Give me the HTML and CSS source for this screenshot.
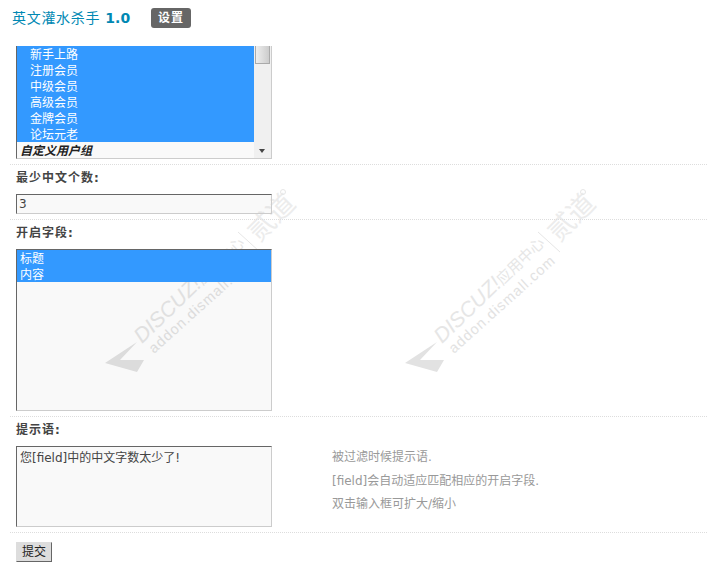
FILE: index.html
```html
<!DOCTYPE html>
<html lang="zh">
<head>
<meta charset="utf-8">
<title>英文灌水杀手 1.0</title>
<link rel="stylesheet" href="styles.css">
</head>
<body>
<svg class="watermark" width="707" height="573" viewBox="0 0 707 573" aria-hidden="true">
  <defs>
    <g id="mark">
      <path class="wm-arrow" d="M105 363 L137 342 L120 360 L144 360 L137 372 Z"/>
      <text class="wm-main" transform="translate(142 344) rotate(-44)">DISCUZ!<tspan class="wm-cn">应用中心</tspan></text>
      <text class="wm-sub" transform="translate(154 354) rotate(-42)">addon.dismall.com</text>
      <path class="wm-bar" d="M238 232 L260 252"/>
      <text class="wm-cn2" transform="translate(259 243) rotate(-45)">贰道</text>
      <circle class="wm-reg" cx="283" cy="192" r="2.5"/>
    </g>
  </defs>
  <use href="#mark"/>
  <use href="#mark" x="300"/>
</svg>
<main class="page">
  <header class="head">
    <h1 class="title">英文灌水杀手 <b>1.0</b></h1>
    <a class="tab">设置</a>
  </header>
  <form class="form">
    <section class="row first">
      <div class="listbox groups">
        <div class="options">
          <div class="opt sel nested">新手上路</div>
          <div class="opt sel nested">注册会员</div>
          <div class="opt sel nested">中级会员</div>
          <div class="opt sel nested">高级会员</div>
          <div class="opt sel nested">金牌会员</div>
          <div class="opt sel nested">论坛元老</div>
          <div class="opt group">自定义用户组</div>
        </div>
        <div class="scrollbar">
          <div class="thumb"></div>
          <div class="arrow"></div>
        </div>
      </div>
    </section>
    <section class="row">
      <label class="label">最少中文个数:</label>
      <input class="field text" value="3">
    </section>
    <section class="row">
      <label class="label">开启字段:</label>
      <div class="listbox fields">
        <div class="options">
          <div class="opt sel">标题</div>
          <div class="opt sel">内容</div>
        </div>
      </div>
    </section>
    <section class="row">
      <label class="label">提示语:</label>
      <div class="split">
        <textarea class="field area">您[field]中的中文字数太少了!</textarea>
        <div class="tips">
          <p>被过滤时候提示语.</p>
          <p>[field]会自动适应匹配相应的开启字段.</p>
          <p>双击输入框可扩大/缩小</p>
        </div>
      </div>
    </section>
    <div class="actions"><button class="submit" type="button">提交</button></div>
  </form>
</main>
</body>
</html>
```
FILE: styles.css
```css
* { box-sizing: border-box; }
html, body { margin: 0; padding: 0; background: #fff; }
body {
  position: relative;
  width: 707px;
  height: 573px;
  overflow: hidden;
  font: 12px/16px "DejaVu Sans", "Noto Sans CJK SC", sans-serif;
  color: #444;
}
.watermark { position: absolute; left: 0; top: 0; z-index: 0; }
.wm-arrow { fill: #e2e2e2; }
.wm-main { font: italic 21px "Liberation Sans", "Noto Sans CJK SC", sans-serif; fill: #e6e6e6; }
.wm-cn { font-size: 15px; font-style: normal; }
.wm-sub { font: 14.5px "Liberation Sans", sans-serif; letter-spacing: 1px; fill: #e2e2e2; }
.wm-bar { stroke: #e6e6e6; stroke-width: 1; fill: none; }
.wm-cn2 { font: 27px "Noto Sans CJK SC", sans-serif; fill: #ececec; }
.wm-reg { stroke: #e6e6e6; stroke-width: 1; fill: none; }

.page { position: relative; z-index: 1; padding-left: 10px; }
.head { display: flex; align-items: center; height: 46px; padding: 0 0 10px 2px; }
.title { margin: 0; font-size: 14px; font-weight: normal; letter-spacing: .7px; color: #0088b3; width: 139px; white-space: nowrap; }
.title b { letter-spacing: 0; }
.tab {
  width: 40px; height: 20px; background: #666; color: #fff; border-radius: 3px;
  font-weight: bold; text-align: center; line-height: 20px; letter-spacing: 1px;
}
.row { padding: 0 0 5px 6px; border-bottom: 1px dotted #ddd; }
.label { display: block; height: 29px; padding-top: 5px; font-weight: bold; letter-spacing: 1px; color: #444; }
.listbox {
  display: flex; width: 256px; background: rgba(0,0,0,.024);
  border: 1px solid; border-color: #666 #ccc #ccc #666;
}
.listbox.groups { height: 113px; border-top: 0; }
.listbox.fields { height: 162px; }
.options { flex: 1; min-width: 0; }
.opt { height: 16px; padding: 1px 0 0 3px; line-height: 16px; color: #222; white-space: nowrap; }
.opt.sel { background: #3399ff; color: #fff; }
.opt.nested { padding-left: 13px; }
.opt.group { font-style: italic; font-weight: bold; }
.scrollbar { position: relative; width: 17px; flex: none; background: #f0f0f0; }
.thumb { width: 15px; height: 18px; margin-left: 1px; border: 1px solid #aaa; border-top: 0; background: linear-gradient(90deg, #eee, #ccc); }
.arrow {
  position: absolute; left: 5px; bottom: 5px; width: 0; height: 0;
  border: 3.5px solid transparent; border-top: 4px solid #444; border-bottom: 0;
}
.field {
  display: block; width: 256px; margin: 0; padding: 3px 3px 2px; background: rgba(0,0,0,.024);
  border: 1px solid; border-color: #666 #ccc #ccc #666; border-radius: 0; outline: 0;
  font: 12px/16px "DejaVu Sans", "Noto Sans CJK SC", sans-serif; color: #444;
}
.text { height: 20px; padding: 2px; }
.area { height: 81px; resize: none; overflow: hidden; }
.split { display: flex; }
.tips { margin-left: 60px; padding-top: 3px; color: #999; }
.tips p { margin: 0 0 7.5px; line-height: 16px; }
.actions { padding: 9px 0 0 6px; }
.submit {
  display: block; width: 36px; height: 20px; padding: 0; background: #ddd; color: #222;
  border: 1px solid; border-color: #ddd #666 #666 #ddd; border-radius: 0;
  font: 12px/16px "DejaVu Sans", "Noto Sans CJK SC", sans-serif;
}
```
